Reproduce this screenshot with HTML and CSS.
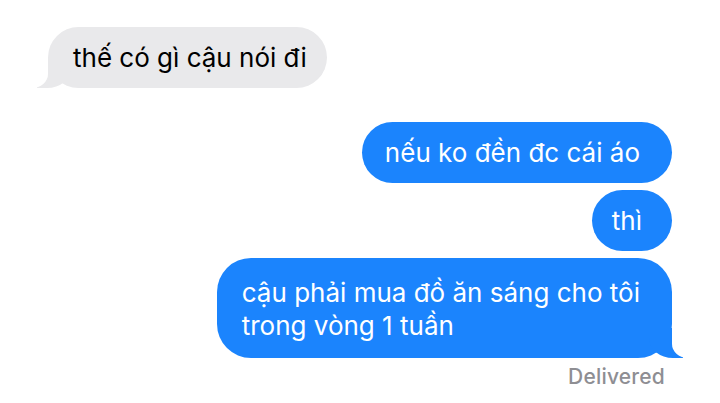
FILE: index.html
```html
<!DOCTYPE html>
<html lang="vi">
<head>
<meta charset="utf-8">
<title>Messages</title>
<link rel="stylesheet" href="styles.css">
</head>
<body>
<main class="thread">
  <div class="msg received tail">thế có gì cậu nói đi</div>
  <div class="group-sent">
    <div class="msg sent">nếu ko đền đc cái áo</div>
    <div class="msg sent short">thì</div>
    <div class="msg sent multi tail">cậu phải mua đồ ăn sáng cho tôi<br>trong vòng 1 tuần</div>
  </div>
  <div class="status">Delivered</div>
</main>
</body>
</html>
```
FILE: styles.css
```css
* { box-sizing: border-box; }
html, body { margin: 0; padding: 0; background: #fff; }
body {
  width: 720px;
  height: 403px;
  overflow: hidden;
  font-family: "Inter", "Liberation Sans", sans-serif;
}
.thread {
  display: flex;
  flex-direction: column;
  padding: 27px 48px 0 48px;
}
.msg {
  position: relative;
  font-size: 26px;
  line-height: 33px;
  padding: 14px 24px 14px 24px;
  border-radius: 31px;
  white-space: nowrap;
}
.received {
  align-self: flex-start;
  background: #e9e9eb;
  color: #000;
  padding-left: 25px;
  padding-right: 20px;
}
.group-sent {
  margin-top: 34px;
  display: flex;
  flex-direction: column;
  align-items: flex-end;
  gap: 7px;
}
.sent {
  background: #1b84fd;
  color: #fff;
  padding-left: 23px;
  padding-right: 32px;
}
.sent.short {
  padding-left: 20px;
  padding-right: 30px;
}
.sent.multi {
  padding-left: 25px;
  padding-top: 18px;
  padding-bottom: 16px;
  border-radius: 34px;
}
.tail::before,
.tail::after {
  content: "";
  position: absolute;
  bottom: 0;
  height: 30px;
}
.sent.tail::before {
  right: -11px;
  width: 34px;
  background: #1b84fd;
  border-bottom-left-radius: 24px 20px;
}
.sent.tail::after {
  right: -40px;
  width: 40px;
  background: #fff;
  border-bottom-left-radius: 16px 14px;
}
.received.tail::before {
  left: -11px;
  width: 34px;
  background: #e9e9eb;
  border-bottom-right-radius: 24px 20px;
}
.received.tail::after {
  left: -40px;
  width: 40px;
  background: #fff;
  border-bottom-right-radius: 16px 14px;
}
.status {
  align-self: flex-end;
  margin-top: 6px;
  margin-right: 7px;
  font-size: 21px;
  font-weight: 500;
  color: #8e8e93;
  letter-spacing: 0.2px;
}
```
